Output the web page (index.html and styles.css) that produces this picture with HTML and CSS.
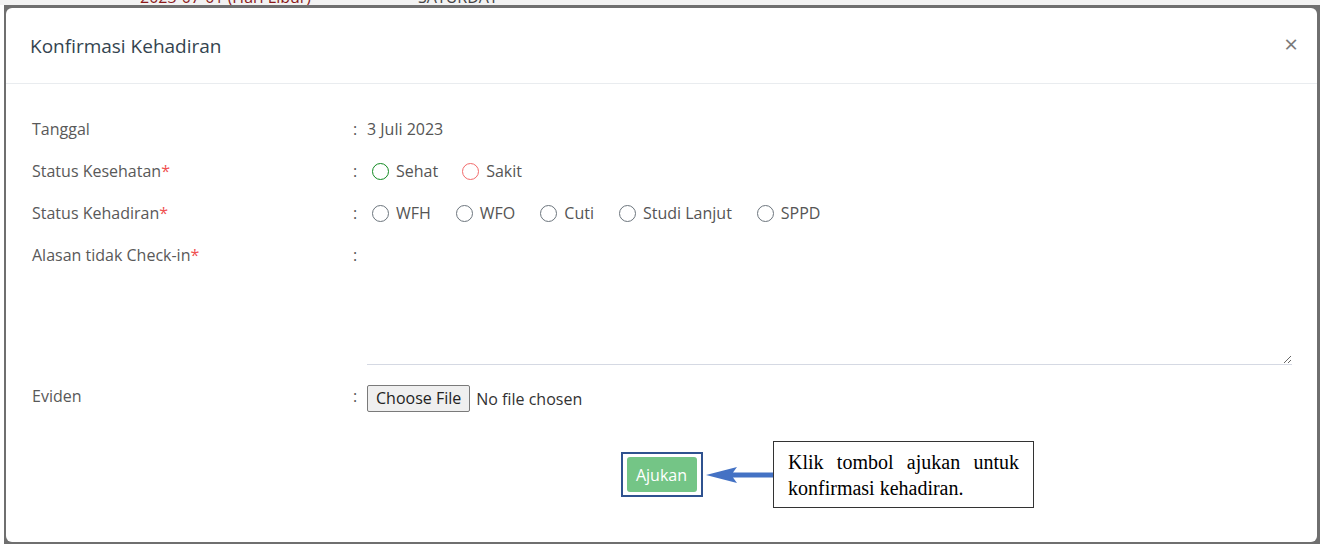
FILE: index.html
```html
<!DOCTYPE html>
<html lang="id">
<head>
    <meta charset="UTF-8" />
    <meta name="viewport" content="width=device-width, initial-scale=1" />
    <title>Konfirmasi Kehadiran</title>
    <link rel="stylesheet" href="styles.css">
</head>
<body>

<!-- sisa tabel di belakang modal -->
<div class="page-peek">
    <span class="peek-date">2023-07-01 (Hari Libur)</span>
    <span class="peek-day">SATURDAY</span>
</div>

<div class="overlay">
    <div class="modal">
        <div class="modal-header">
            <h3 class="modal-title">Konfirmasi Kehadiran</h3>
            <span class="close">&times;</span>
        </div>

        <div class="modal-body">
            <div class="form-row">
                <div class="label">Tanggal</div>
                <div class="colon">:</div>
                <div class="value">3 Juli 2023</div>
            </div>

            <div class="form-row">
                <div class="label">Status Kesehatan<span class="req">*</span></div>
                <div class="colon">:</div>
                <div class="value options health">
                    <label class="opt"><input type="radio" name="kesehatan" class="radio green"> Sehat</label>
                    <label class="opt"><input type="radio" name="kesehatan" class="radio red"> Sakit</label>
                </div>
            </div>

            <div class="form-row">
                <div class="label">Status Kehadiran<span class="req">*</span></div>
                <div class="colon">:</div>
                <div class="value options">
                    <label class="opt"><input type="radio" name="hadir" class="radio"> WFH</label>
                    <label class="opt"><input type="radio" name="hadir" class="radio"> WFO</label>
                    <label class="opt"><input type="radio" name="hadir" class="radio"> Cuti</label>
                    <label class="opt"><input type="radio" name="hadir" class="radio"> Studi Lanjut</label>
                    <label class="opt"><input type="radio" name="hadir" class="radio"> SPPD</label>
                </div>
            </div>

            <div class="form-row">
                <div class="label">Alasan tidak Check-in<span class="req">*</span></div>
                <div class="colon">:</div>
                <div class="value">
                    <textarea class="reason"></textarea>
                </div>
            </div>

            <div class="form-row">
                <div class="label">Eviden</div>
                <div class="colon">:</div>
                <div class="value file">
                    <span class="file-btn">Choose File</span>
                    <span class="file-name">No file chosen</span>
                </div>
            </div>
        </div>

        <div class="modal-footer">
            <div class="highlight">
                <button class="btn-submit">Ajukan</button>
            </div>

            <!-- anotasi panduan -->
            <div class="arrow">
                <svg width="68" height="16" viewBox="0 0 68 16">
                    <polygon points="0,8 31,0 27,5.5 68,5.5 68,10.5 27,10.5 31,16" fill="#4472c4"/>
                </svg>
            </div>
            <div class="callout">Klik tombol ajukan untuk konfirmasi kehadiran.</div>
        </div>
    </div>
</div>

</body>
</html>
```

FILE: styles.css
```css
body {
    margin: 0;
    background-color: #fff;
    font-family: "Open Sans", "Noto Sans", sans-serif;
    width: 1320px;
    height: 547px;
    overflow: hidden;
}

/* potongan tabel di atas */
.page-peek {
    height: 5px;
    overflow: hidden;
    position: relative;
    background: #f2f2f2;
    font-size: 16px;
    line-height: 16px;
}
.peek-date,
.peek-day {
    position: absolute;
    top: -11px;
}
.peek-date {
    left: 140px;
    color: #8b1a1a;
}
.peek-day {
    left: 418px;
    color: #444;
}

.overlay {
    background-color: #6f6f6f;
    margin-left: 4px;
    padding: 3px 3px 2px 2px;
}

.modal {
    background: #fff;
    border-radius: 6px;
    height: 534px;
    display: flex;
    flex-direction: column;
}

.modal-header {
    display: flex;
    justify-content: space-between;
    align-items: center;
    height: 75px;
    padding: 0 19px 0 24px;
    border-bottom: 1px solid #e9ecef;
}
.modal-title {
    margin: 0;
    font-size: 19px;
    font-weight: 400;
    color: #34444f;
}
.close {
    font-size: 24px;
    color: #7a7a7a;
    line-height: 1;
    margin-top: -4px;
}

.modal-body {
    padding: 34px 24px 0 26px;
}

.form-row {
    display: grid;
    grid-template-columns: 321px 14px 1fr;
    align-items: start;
    font-size: 16px;
    line-height: 22px;
    color: #555;
    margin-bottom: 20px;
}
.label {
    color: #595959;
}
.req {
    color: #f05050;
}

.options {
    display: flex;
    gap: 20px;
}
.options.health {
    gap: 19px;
}
.opt {
    display: flex;
    align-items: center;
    gap: 7px;
}
.radio {
    appearance: none;
    -webkit-appearance: none;
    width: 17px;
    height: 17px;
    margin: 0 0 0 5px;
    border: 1.6px solid #6c757d;
    border-radius: 50%;
    background: #fff;
}
.radio.green {
    border-color: #128a22;
}
.radio.red {
    border-color: #f26b6b;
}

.reason {
    display: block;
    box-sizing: border-box;
    width: 925px;
    height: 123px;
    border: none;
    border-bottom: 1px solid #d5d9e3;
    margin-top: -2px;
    font-family: inherit;
    resize: vertical;
    outline: none;
}

.file {
    display: flex;
    align-items: center;
    gap: 6px;
}
.file-btn {
    box-sizing: border-box;
    height: 27px;
    line-height: 25px;
    padding: 0 8px;
    background: #efefef;
    border: 1px solid #7a7a7a;
    border-radius: 2px;
    color: #222;
}
.file-name {
    color: #333;
}

.modal-footer {
    position: relative;
    display: flex;
    justify-content: center;
    padding-top: 20px;
}

.highlight {
    border: 2px solid #2f528f;
    padding: 3px 4px;
}
.btn-submit {
    display: block;
    width: 70px;
    background-color: #74c586;
    color: #fff;
    border: none;
    border-radius: 3px;
    height: 35px;
    padding: 0;
    font-family: inherit;
    font-size: 16px;
}

.arrow {
    position: absolute;
    left: 700px;
    top: 35px;
    line-height: 0;
}

.callout {
    position: absolute;
    left: 767px;
    top: 9px;
    width: 231px;
    padding: 7px 14px 6px 14px;
    border: 1px solid #333;
    background: #fff;
    font-family: "Liberation Serif", "DejaVu Serif", serif;
    font-size: 20px;
    line-height: 26px;
    color: #000;
    text-align: justify;
}
```
